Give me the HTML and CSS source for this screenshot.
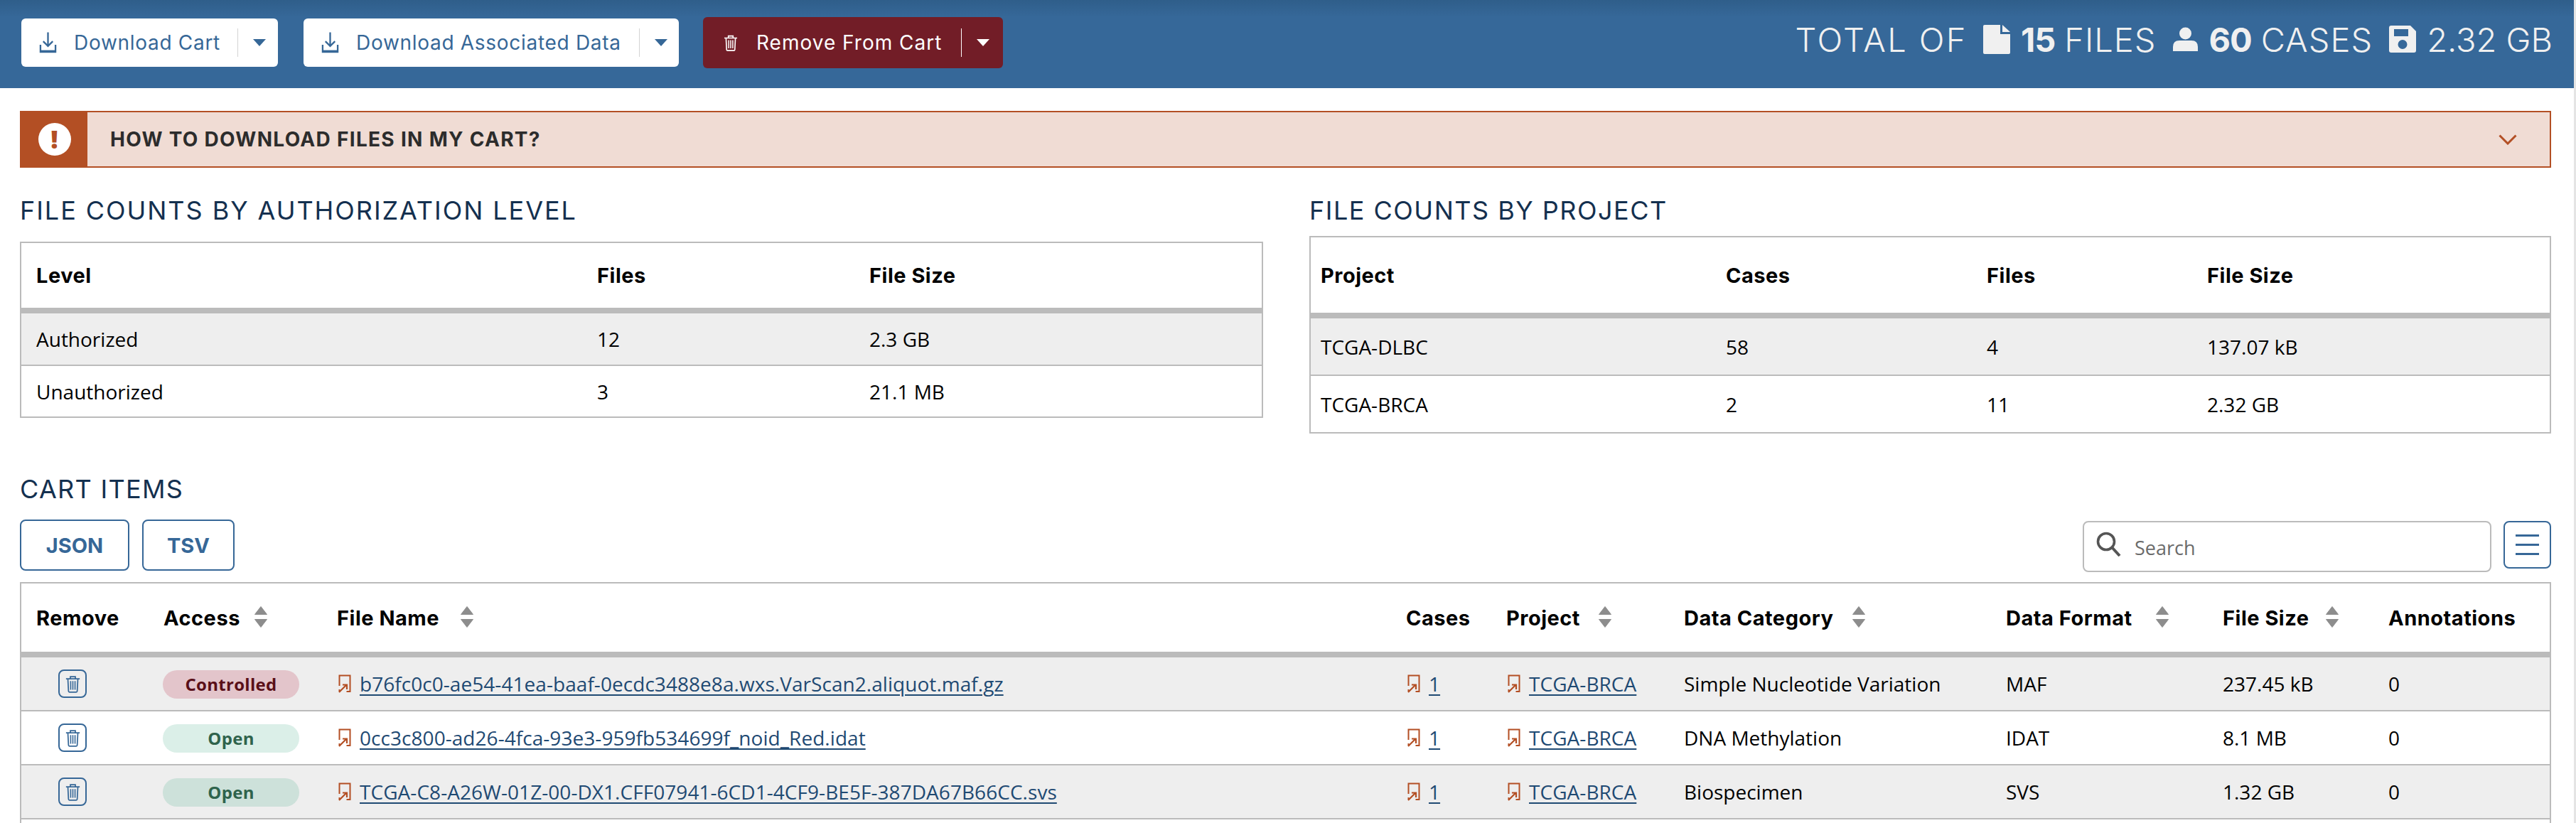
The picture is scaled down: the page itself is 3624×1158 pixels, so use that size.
FILE: index.html
```html
<!DOCTYPE html>
<html lang="en">
<head>
<meta charset="utf-8">
<title>Cart</title>
<link rel="stylesheet" href="styles.css">
</head>
<body>
<svg class="defs" width="0" height="0" aria-hidden="true">
  <defs>
    <symbol id="i-download" viewBox="0 0 26 32"><path d="M13 1v20M6 14l7 7 7-7" fill="none" stroke="currentColor" stroke-width="2.4"/><path d="M2 19v10.5h22V19" fill="none" stroke="currentColor" stroke-width="2.4"/><path d="M2 27h22v3H2z" fill="currentColor"/></symbol>
    <symbol id="i-trash" viewBox="0 0 24 28"><path d="M1 5.500h22M8 5V2h8v3M4 6l1 19.500q.1 1.500 1.500 1.500h11q1.400 0 1.500-1.500L20 6" fill="none" stroke="currentColor" stroke-width="2"/><path d="M8.500 9v14M12 9v14M15.500 9v14" fill="none" stroke="currentColor" stroke-width="1.800"/></symbol>
    <symbol id="i-link" viewBox="0 0 18 26"><path d="M1.500 16V1.500h15v22.500h-5M1.500 21v3" fill="none" stroke="currentColor" stroke-width="2"/><path d="M1 25l10-10M6 14.500h6v6.500" fill="none" stroke="currentColor" stroke-width="2.200"/></symbol>
    <symbol id="i-sort" viewBox="0 0 18 30"><path d="M9 0.500 17.500 11.500H.5zM9 29.500.5 18.500h17z" fill="currentColor" stroke="currentColor" stroke-linejoin="round"/></symbol>
  </defs>
</svg>

<header class="topbar">
  <div class="actions">
    <button class="split split-light split-cart">
      <svg class="ico-dl"><use href="#i-download"/></svg>
      <span class="split-label">Download Cart</span>
      <span class="split-sep"></span>
      <span class="caret"></span>
    </button>
    <button class="split split-light split-assoc">
      <svg class="ico-dl"><use href="#i-download"/></svg>
      <span class="split-label">Download Associated Data</span>
      <span class="split-sep"></span>
      <span class="caret"></span>
    </button>
    <button class="split split-danger">
      <svg class="ico-trash-lg"><use href="#i-trash"/></svg>
      <span class="split-label">Remove From Cart</span>
      <span class="split-sep"></span>
      <span class="caret"></span>
    </button>
  </div>
  <div class="totals">
    <span class="t-word t-total">TOTAL OF</span>
    <svg class="t-file" viewBox="0 0 38 41"><path d="M2 0h22v13h14v26q0 2-2 2H2q-2 0-2-2V2q0-2 2-2zM27 0l11 10H27z" fill="currentColor"/></svg>
    <b class="t-num">15</b>
    <span class="t-word t-wide">FILES</span>
    <svg class="t-person" viewBox="0 0 35 34"><circle cx="17.500" cy="9" r="8.500" fill="currentColor"/><path d="M0 34v-6q0-9 9-9h17q9 0 9 9v6z" fill="currentColor"/></svg>
    <b class="t-num">60</b>
    <span class="t-word t-wide">CASES</span>
    <svg class="t-disk" viewBox="0 0 38 38"><path fill-rule="evenodd" d="M3 0h27l8 8v27q0 3-3 3H3q-3 0-3-3V3q0-3 3-3zM7 5v10h20V5zM19 20a6.500 6.500 0 1 0 0 13 6.500 6.500 0 0 0 0-13z" fill="currentColor"/></svg>
    <span class="t-word">2.32 GB</span>
  </div>
</header>

<main class="page">
  <section class="alert">
    <div class="alert-tab"><span class="alert-dot">!</span></div>
    <div class="alert-text">HOW TO DOWNLOAD FILES IN MY CART?</div>
    <svg class="alert-chevron" viewBox="0 0 26 15"><path d="M1.500 1.500 13 13 24.500 1.500" fill="none" stroke="currentColor" stroke-width="3"/></svg>
  </section>

  <section class="summary">
    <div>
      <h2 class="title title-auth">FILE COUNTS BY AUTHORIZATION LEVEL</h2>
      <table class="tbl tbl-auth">
        <thead><tr><th class="c-a1">Level</th><th class="c-a2">Files</th><th>File Size</th></tr></thead>
        <tbody>
          <tr><td>Authorized</td><td>12</td><td>2.3 GB</td></tr>
          <tr><td>Unauthorized</td><td>3</td><td>21.1 MB</td></tr>
        </tbody>
      </table>
    </div>
    <div>
      <h2 class="title title-proj">FILE COUNTS BY PROJECT</h2>
      <table class="tbl tbl-proj">
        <thead><tr><th class="c-p1">Project</th><th class="c-p2">Cases</th><th class="c-p3">Files</th><th>File Size</th></tr></thead>
        <tbody>
          <tr><td>TCGA-DLBC</td><td>58</td><td>4</td><td>137.07 kB</td></tr>
          <tr><td>TCGA-BRCA</td><td>2</td><td>11</td><td>2.32 GB</td></tr>
        </tbody>
      </table>
    </div>
  </section>

  <h2 class="title title-cart">CART ITEMS</h2>
  <div class="toolbar">
    <div class="exports">
      <button class="btn-out btn-json">JSON</button>
      <button class="btn-out btn-tsv">TSV</button>
    </div>
    <div class="tools">
      <label class="search">
        <svg class="search-ico" viewBox="0 0 35 35"><circle cx="14" cy="14" r="11.500" fill="none" stroke="currentColor" stroke-width="3.600"/><path d="M22 22l11 12" stroke="currentColor" stroke-width="4" fill="none"/></svg>
        <input class="search-input" type="text" placeholder="Search">
      </label>
      <button class="btn-menu" aria-label="Columns"><span></span><span></span><span></span></button>
    </div>
  </div>

  <table class="tbl tbl-cart">
    <thead>
      <tr>
        <th class="c1">Remove</th>
        <th class="c2"><span class="th-in th-access">Access<svg class="sort"><use href="#i-sort"/></svg></span></th>
        <th class="c3"><span class="th-in th-name">File Name<svg class="sort"><use href="#i-sort"/></svg></span></th>
        <th class="c4">Cases</th>
        <th class="c5"><span class="th-in th-project">Project<svg class="sort"><use href="#i-sort"/></svg></span></th>
        <th class="c6"><span class="th-in th-cat">Data Category<svg class="sort"><use href="#i-sort"/></svg></span></th>
        <th class="c7"><span class="th-in th-fmt">Data Format<svg class="sort"><use href="#i-sort"/></svg></span></th>
        <th class="c8"><span class="th-in th-size">File Size<svg class="sort"><use href="#i-sort"/></svg></span></th>
        <th>Annotations</th>
      </tr>
    </thead>
    <tbody>
      <tr>
        <td><button class="btn-del"><svg><use href="#i-trash"/></svg></button></td>
        <td><span class="badge badge-ctrl">Controlled</span></td>
        <td><span class="lnk"><svg class="ico-link"><use href="#i-link"/></svg><a href="#">b76fc0c0-ae54-41ea-baaf-0ecdc3488e8a.wxs.VarScan2.aliquot.maf.gz</a></span></td>
        <td><span class="lnk"><svg class="ico-link"><use href="#i-link"/></svg><a href="#">1</a></span></td>
        <td><span class="lnk"><svg class="ico-link"><use href="#i-link"/></svg><a href="#">TCGA-BRCA</a></span></td>
        <td>Simple Nucleotide Variation</td>
        <td>MAF</td>
        <td>237.45 kB</td>
        <td>0</td>
      </tr>
      <tr>
        <td><button class="btn-del"><svg><use href="#i-trash"/></svg></button></td>
        <td><span class="badge badge-open">Open</span></td>
        <td><span class="lnk"><svg class="ico-link"><use href="#i-link"/></svg><a href="#">0cc3c800-ad26-4fca-93e3-959fb534699f_noid_Red.idat</a></span></td>
        <td><span class="lnk"><svg class="ico-link"><use href="#i-link"/></svg><a href="#">1</a></span></td>
        <td><span class="lnk"><svg class="ico-link"><use href="#i-link"/></svg><a href="#">TCGA-BRCA</a></span></td>
        <td>DNA Methylation</td>
        <td>IDAT</td>
        <td>8.1 MB</td>
        <td>0</td>
      </tr>
      <tr>
        <td><button class="btn-del"><svg><use href="#i-trash"/></svg></button></td>
        <td><span class="badge badge-open">Open</span></td>
        <td><span class="lnk"><svg class="ico-link"><use href="#i-link"/></svg><a href="#">TCGA-C8-A26W-01Z-00-DX1.CFF07941-6CD1-4CF9-BE5F-387DA67B66CC.svs</a></span></td>
        <td><span class="lnk"><svg class="ico-link"><use href="#i-link"/></svg><a href="#">1</a></span></td>
        <td><span class="lnk"><svg class="ico-link"><use href="#i-link"/></svg><a href="#">TCGA-BRCA</a></span></td>
        <td>Biospecimen</td>
        <td>SVS</td>
        <td>1.32 GB</td>
        <td>0</td>
      </tr>
      <tr class="row-cut"><td colspan="9"></td></tr>
    </tbody>
  </table>
</main>
</body>
</html>
```
FILE: styles.css
```css
* { box-sizing: border-box; }
html, body { margin: 0; height: 100%; overflow: hidden; background: #fff; }
body { font-family: "Open Sans", sans-serif; color: #000; border-right: 3px solid #e4e4e4; }
button { font-family: inherit; cursor: pointer; padding: 0; }
.defs { display: block; height: 0; }

/* Top bar */
.topbar {
  height: 124px;
  padding: 24px 30px 0 30px;
  display: flex;
  justify-content: space-between;
  align-items: flex-start;
  background: linear-gradient(#2f5e8a, #366899 24px);
}
.actions { display: flex; align-items: center; height: 72px; }
.split {
  display: flex;
  align-items: center;
  border: 0;
  border-radius: 6px;
  font-family: Inter, sans-serif;
  font-weight: 400;
  font-size: 28px;
  white-space: nowrap;
  text-align: left;
}
.split-light { height: 68px; background: #fff; color: #366797; padding-left: 25px; }
.split-cart { width: 361px; margin-right: 36px; }
.split-assoc { width: 528px; margin-right: 34px; }
.split-danger { height: 72px; width: 422px; background: #721d27; color: #fff; padding-left: 29px; }
.ico-dl { width: 25px; height: 32px; margin-right: 24px; flex: none; }
.ico-trash-lg { width: 20px; height: 23px; margin-right: 26px; flex: none; }
.split-label { letter-spacing: .7px; }
.split-cart .split-label { width: 230px; }
.split-assoc .split-label { width: 398px; }
.split-danger .split-label { width: 288px; letter-spacing: 1px; }
.split-sep { width: 1px; height: 40px; background: #d4d4d4; }
.split-danger .split-sep { background: #fff; }
.caret {
  margin-left: 21px;
  border-left: 9px solid transparent;
  border-right: 9px solid transparent;
  border-top: 10px solid currentColor;
}

.totals {
  display: flex;
  align-items: center;
  height: 58px;
  margin-top: 2px;
  color: #f0f0f0;
  font-family: Inter, sans-serif;
  font-size: 47px;
  font-weight: 300;
  white-space: nowrap;
}
.t-total { letter-spacing: 2.400px; }
.t-wide { letter-spacing: 1px; }
.t-num { font-weight: 700; margin: 0 13px 0 15px; letter-spacing: -1px; }
.t-file { width: 38px; height: 41px; margin-left: 22px; }
.t-person { width: 35px; height: 34px; margin-left: 24px; }
.t-disk { width: 38px; height: 38px; margin: 0 15px 0 23px; }

/* Page body */
.page { padding: 32px 32px 0 28px; }
.alert {
  height: 80px;
  display: flex;
  align-items: center;
  background: #f0dcd4;
  border: 2px solid #b34f24;
  color: #2c2c2c;
}
.alert-tab {
  width: 93px;
  align-self: stretch;
  background: #b34f24;
  display: flex;
  align-items: center;
  justify-content: center;
}
.alert-dot {
  width: 46px;
  height: 46px;
  border-radius: 50%;
  background: #fff;
  color: #b34f24;
  font: 800 36px/46px "Open Sans", sans-serif;
  text-align: center;
}
.alert-text {
  flex: 1;
  padding-left: 32px;
  font-family: Inter, sans-serif;
  font-size: 28px;
  font-weight: 700;
  letter-spacing: 1.300px;
}
.alert-chevron { width: 26px; height: 15px; margin-right: 46px; color: #b34f24; }

.summary {
  display: grid;
  grid-template-columns: 1749px 1747px;
  justify-content: space-between;
  margin-top: 38px;
  height: 336px;
}
.title {
  margin: 0;
  height: 44px;
  font-family: Inter, sans-serif;
  font-size: 36px;
  line-height: 44px;
  font-weight: 400;
  color: #14304f;
  white-space: nowrap;
}
.title-auth { margin-bottom: 22px; letter-spacing: 1.950px; }
.title-proj { margin-bottom: 14px; letter-spacing: 1.500px; }
.title-cart { margin-top: 56px; letter-spacing: 1.300px; }

/* Tables */
.tbl {
  width: 100%;
  table-layout: fixed;
  border-collapse: separate;
  border-spacing: 0;
  border: 2px solid #bbb;
  font-size: 28px;
}
.tbl th {
  text-align: left;
  font-family: Inter, sans-serif;
  font-size: 29px;
  font-weight: 700;
  letter-spacing: .5px;
  border-bottom: 8px solid #bbb;
  white-space: nowrap;
}
.tbl td { white-space: nowrap; border-bottom: 2px solid #bbb; }
.tbl tbody tr:nth-child(odd) td { background: #eee; }
.tbl-auth tr:last-child td, .tbl-proj tr:last-child td { border-bottom: 0; }
.tbl-auth th, .tbl-auth td, .tbl-cart th, .tbl-cart td { padding: 0 0 0 21px; }
.tbl-proj th, .tbl-proj td { padding: 0 0 0 14px; }

.tbl-auth thead tr { height: 99px; }
.tbl-auth tbody tr { height: 74px; }
.tbl-auth tbody tr:last-child { height: 71px; }
.c-a1 { width: 789px; }
.c-a2 { width: 383px; }

.tbl-proj thead tr { height: 114px; }
.tbl-proj tbody tr { height: 81px; }
.tbl-proj tbody tr:last-child { height: 79px; }
.c-p1 { width: 570px; }
.c-p2 { width: 367px; }
.c-p3 { width: 310px; }

/* Cart */
.toolbar { display: flex; justify-content: space-between; margin-top: 21px; height: 74px; margin-bottom: 14px; }
.exports { display: flex; gap: 18px; height: 72px; }
.btn-out {
  height: 72px;
  background: #fff;
  border: 2px solid #366797;
  border-radius: 8px;
  color: #366797;
  font-family: Inter, sans-serif;
  font-size: 29px;
  font-weight: 700;
}
.btn-json { width: 154px; }
.btn-tsv { width: 130px; }
.tools { display: flex; gap: 17px; margin-top: 2px; align-items: flex-start; }
.search {
  width: 575px;
  height: 72px;
  display: flex;
  align-items: center;
  padding-left: 17px;
  border: 2px solid #bbb;
  border-radius: 8px;
  background: #fff;
}
.search-ico { width: 35px; height: 35px; color: #555; margin: -8px 19px 0 0; flex: none; }
.search-input {
  flex: 1;
  min-width: 0;
  border: 0;
  outline: 0;
  padding: 0;
  background: transparent;
  font: 400 27px "Open Sans", sans-serif;
  margin-top: 2px;
}
.search-input::placeholder { color: #6b6b6b; opacity: 1; }
.btn-menu {
  width: 67px;
  height: 67px;
  border: 2px solid #366797;
  border-radius: 8px;
  background: #fff;
  display: flex;
  flex-direction: column;
  align-items: center;
  gap: 10px;
  justify-content: center;
}
.btn-menu span { width: 33px; height: 3px; background: #366797; }

.tbl-cart thead tr { height: 104px; }
.tbl-cart tbody tr { height: 76px; }
.tbl-cart .row-cut td { background: #fff; border: 0; }
.c1 { width: 179px; }
.c2 { width: 244px; }
.c3 { width: 1504px; }
.c4 { width: 141px; }
.c5 { width: 250px; }
.c6 { width: 453px; }
.c7 { width: 305px; }
.c8 { width: 233px; }

.th-in { display: flex; align-items: center; }
.sort { width: 18px; height: 30px; color: #8d8d8d; margin-top: -2px; flex: none; }
.th-access { width: 146px; justify-content: space-between; }
.th-name { width: 192px; justify-content: space-between; }
.th-project { width: 148px; justify-content: space-between; }
.th-cat { width: 255px; justify-content: space-between; }
.th-fmt { width: 229px; justify-content: space-between; }
.th-size { width: 163px; justify-content: space-between; }

.btn-del {
  display: flex;
  align-items: center;
  justify-content: center;
  width: 40px;
  height: 40px;
  margin: 0 0 0 31px;
  background: transparent;
  border: 2px solid #366797;
  border-radius: 8px;
  color: #366797;
}
.btn-del svg { width: 21px; height: 25px; }
.badge {
  display: block;
  width: 192px;
  height: 40px;
  margin: 2px 0 0 -1px;
  border-radius: 20px;
  text-align: center;
  font-size: 24px;
  font-weight: 700;
  line-height: 40px;
  letter-spacing: .3px;
}
.badge-ctrl { background: #e3c5cb; color: #5a0f18; }
.badge-open { background: rgba(40, 160, 120, .17); color: #2f634c; }

.lnk { display: flex; align-items: center; }
.lnk a { color: #1f4a73; text-decoration: underline; text-decoration-thickness: 2px; text-underline-offset: 4px; letter-spacing: .05px; }
.ico-link { width: 18px; height: 26px; margin: 0 12px 0 2px; color: #b34f24; flex: none; }
```
